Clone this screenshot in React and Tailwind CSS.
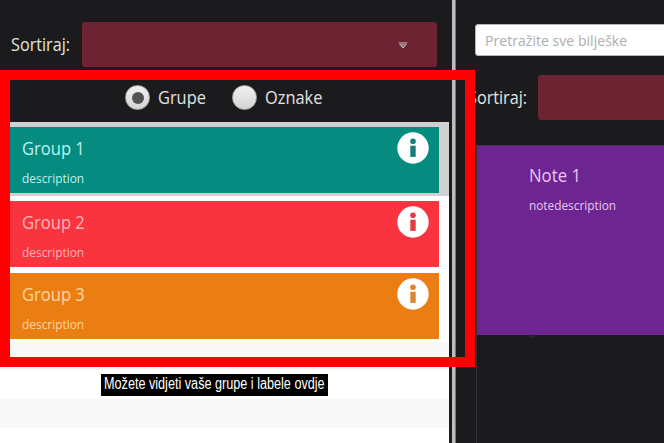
const labelFont = "font-['Open_Sans',sans-serif] whitespace-nowrap origin-left";

function InfoIcon({ hole }) {
  return (
    <svg viewBox="0 0 32 32" className="mt-[5px] mr-[10px] h-8 w-8 shrink-0">
      <circle cx="16" cy="16" r="15.7" fill="#fff" />
      <circle cx="16" cy="9.2" r="2.8" fill={hole} />
      <path d="M13.3 13.7h5.4v11.2h-5.4z" fill={hole} />
    </svg>
  );
}

function GroupCard({ title, color, hole, text, row }) {
  return (
    <div className={`flex shrink-0 pr-[10px] ${row}`}>
      <div className={`flex h-[66px] flex-1 justify-between pl-[22px] ${color}`}>
        <div className={`flex flex-col ${text}`}>
          <span className={`${labelFont} mt-[9px] h-6 scale-x-[0.92] text-[18px] leading-6`}>{title}</span>
          <span className={`${labelFont} mt-[8px] h-5 scale-x-[0.915] text-[13px] leading-5`}>description</span>
        </div>
        <InfoIcon hole={hole} />
      </div>
    </div>
  );
}

function Radio({ checked, label, width }) {
  return (
    <div className={`flex items-center gap-[8px] ${width}`}>
      <span className="flex h-[25px] w-[25px] shrink-0 items-center justify-center rounded-full border border-[#aaa] bg-linear-to-b from-[#f1f1f1] to-[#d4d4d4]">
        {checked && <span className="h-3 w-3 rounded-full bg-[#535353]" />}
      </span>
      <span className={`${labelFont} -mt-[2px] scale-x-[0.91] text-[18px] leading-6 text-[#e2e2e2]`}>{label}</span>
    </div>
  );
}

export default function App() {
  return (
    <div className="relative flex h-[443px] w-[664px] overflow-hidden bg-[#1b1b1d]">
      <section className="flex w-[449px] shrink-0 flex-col">
        <div className="flex h-[70px] shrink-0 pt-[22px] pl-[11px]">
          <span className={`${labelFont} w-[71px] scale-x-[0.9] text-[18px] leading-[45px] text-[#e4e4de]`}>Sortiraj:</span>
          <div className="flex h-[45px] w-[355px] shrink-0 items-center justify-end rounded-[3px] bg-[#6e2333] pr-[28px]">
            <svg viewBox="0 0 12 8" className="h-2 w-3">
              <path d="M1 1h10L6 7z" fill="#957579" />
              <path d="M2.5 3l3.5 4 3.5-4" fill="none" stroke="#c9b4b2" />
            </svg>
          </div>
        </div>
        <div className="flex h-[52px] shrink-0 items-center pt-[3px] pl-[125px]">
          <Radio checked label="Grupe" width="w-[107px]" />
          <Radio label="Oznake" width="w-[100px]" />
        </div>
        <div className="flex flex-1 flex-col bg-white">
          <GroupCard title="Group 1" row="h-[74px] bg-[#d0d0d0] pt-[5px]" color="bg-[#068b80]" hole="#177e79" text="text-[#b9f3eb]" />
          <GroupCard title="Group 2" row="h-[73px] bg-white pt-[4.5px]" color="bg-[#f9343f]" hole="#e33b43" text="text-[#ffb4b7]" />
          <GroupCard title="Group 3" row="h-[73px] bg-white pt-[4px]" color="bg-[#eb7e13]" hole="#d98733" text="text-[#ffd49f]" />
          <div className="h-[28px] bg-[#f8f8f8]" />
          <div className="flex h-[29px] items-start pt-[4px] pl-[101px]">
            <div className="flex h-[22px] w-[227px] bg-black pl-[3px]">
              <span className="origin-left scale-x-[0.79] font-['Liberation_Sans',Arial,sans-serif] text-[16px] leading-[20px] whitespace-nowrap text-white">
                Možete vidjeti vaše grupe i labele ovdje
              </span>
            </div>
          </div>
          <div className="h-[29px] bg-[#f8f8f8]" />
        </div>
      </section>
      <div className="ml-[3px] w-[4px] shrink-0 border-r border-[#77777a] bg-[#bdbdbf]" />
      <section className="flex w-[208px] shrink-0 flex-col overflow-hidden">
        <div className="mt-[24px] ml-[19px] h-[32px] w-[200px] rounded-[3px] border border-[#b5b5b5] bg-white pl-[9px]">
          <span className={`${labelFont} inline-block scale-x-[0.94] text-[15px] leading-[31px] text-[#aeaeae]`}>Pretražite sve bilješke</span>
        </div>
        <div className="mt-[19px] ml-[12px] flex">
          <span className={`${labelFont} w-[70px] shrink-0 scale-x-[0.9] text-[18px] leading-[45px] text-[#e4e4de]`}>Sortiraj:</span>
          <div className="h-[45px] w-[160px] shrink-0 rounded-[3px] bg-[#6e2333]" />
        </div>
        <div className="mt-[25px] ml-[20px] flex flex-1 flex-col border-l border-[#303033]">
          <div className="flex h-[190px] flex-col border-t border-[#4b2b60] bg-[#6d2591] pl-[52px] text-[#eac5f5]">
            <span className={`${labelFont} mt-[17px] h-6 scale-x-[0.93] text-[18px] leading-6`}>Note 1</span>
            <span className={`${labelFont} mt-[8px] h-5 scale-x-[0.91] text-[13px] leading-5`}>notedescription</span>
          </div>
          <div className="ml-[52px] h-[3px] w-[6px] rounded-b-full border border-t-0 border-[#3a2547]" />
        </div>
      </section>
      <div className="absolute top-[70px] left-0 h-[297px] w-[475px] border-10 border-[#fe0000]" />
    </div>
  );
}
